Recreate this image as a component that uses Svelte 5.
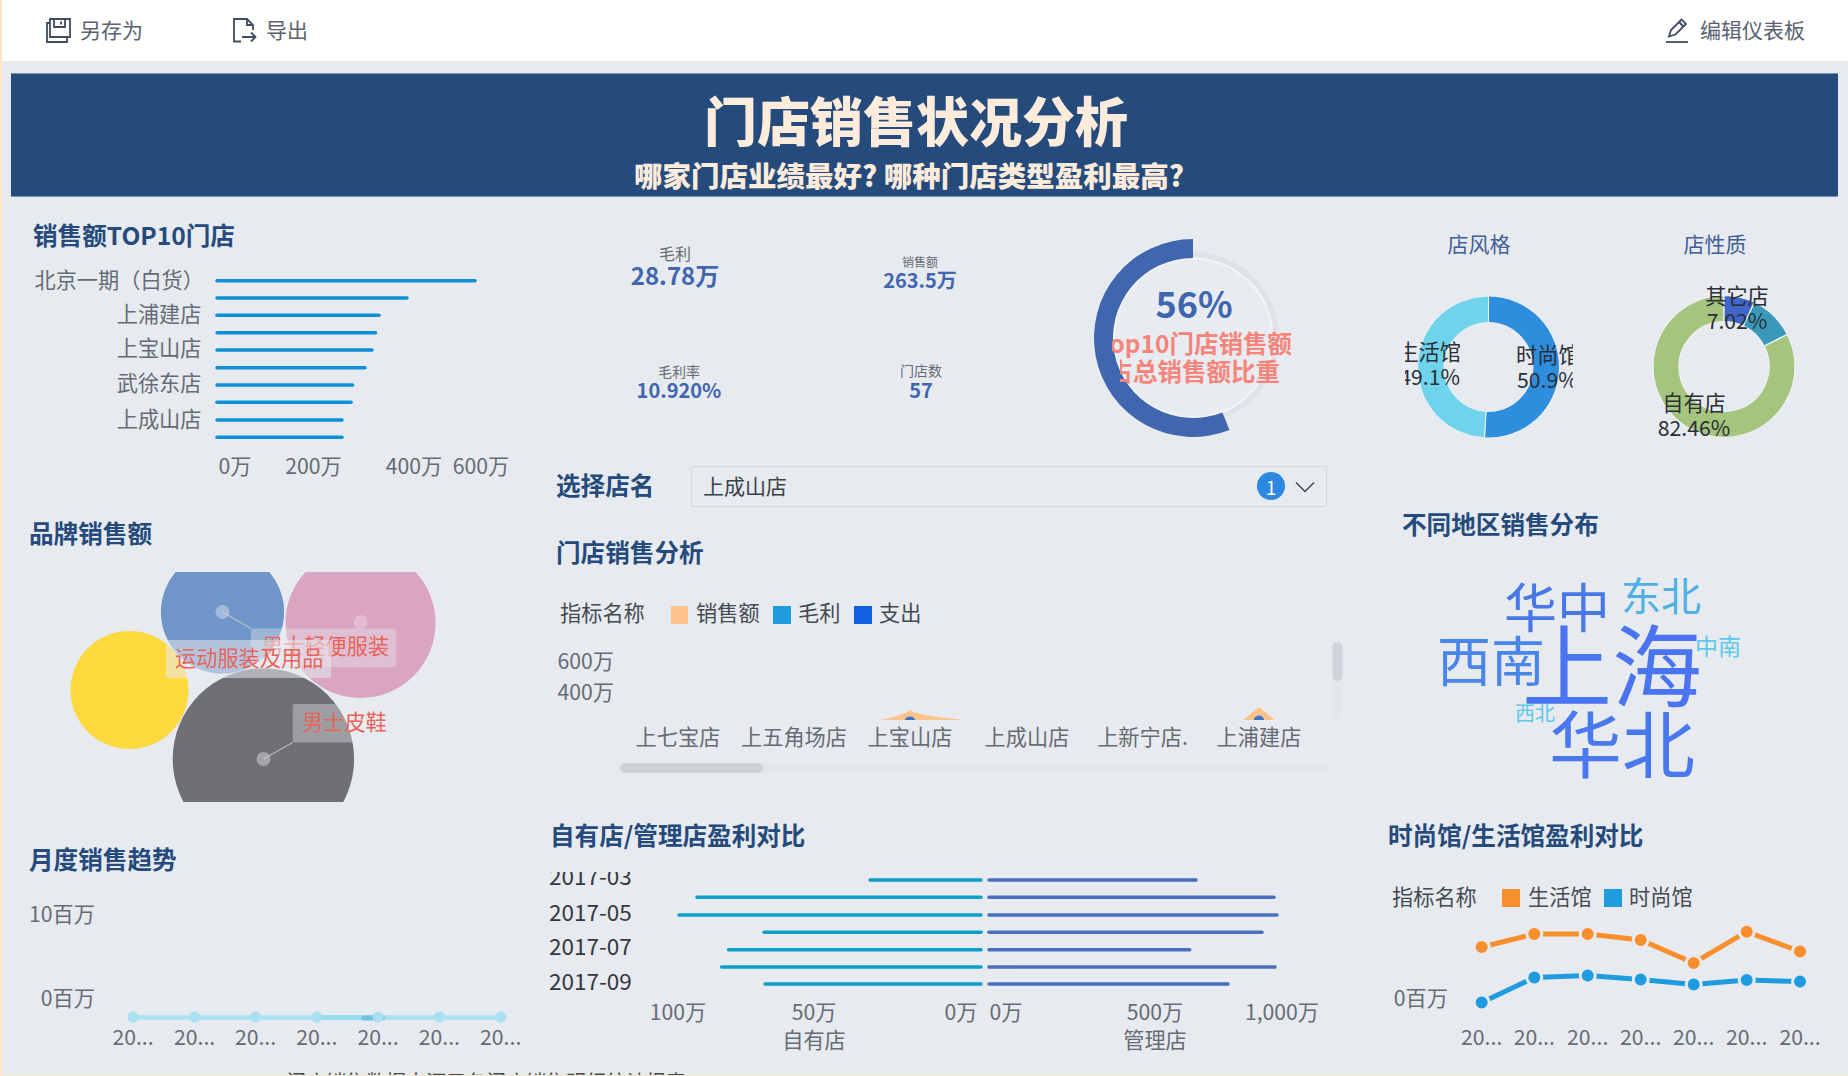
<script>
  const rad = (d) => ((d - 90) * Math.PI) / 180;
  const pt = (cx, cy, r, a) => `${(cx + r * Math.cos(rad(a))).toFixed(2)} ${(cy + r * Math.sin(rad(a))).toFixed(2)}`;
  function sector(cx, cy, r0, r1, a0, a1) {
    const large = Math.abs(a1 - a0) > 180 ? 1 : 0;
    return `M${pt(cx, cy, r1, a0)} A${r1} ${r1} 0 ${large} 1 ${pt(cx, cy, r1, a1)} L${pt(cx, cy, r0, a1)} A${r0} ${r0} 0 ${large} 0 ${pt(cx, cy, r0, a0)} Z`;
  }

  const topStores = [
    [280.7, 476], [298, 408], [315.3, 380], [332.7, 376.5], [350, 373],
    [367.7, 366], [385, 353.6], [402.3, 352], [420, 343], [437.3, 343]
  ];
  const topLabels = [
    ['北京一期（白货）', 280, 204], ['上浦建店', 314, 201.5], ['上宝山店', 348, 201.5], ['武徐东店', 383, 201.5], ['上成山店', 419, 201.5]
  ];
  const topAxis = [['0万', 235], ['200万', 313.5], ['400万', 414], ['600万', 481]];

  const monthX = [133, 194.6, 255.5, 316.8, 378, 439.4, 500.7];

  const storeNames = [
    ['上七宝店', 678], ['上五角场店', 794], ['上宝山店', 910],
    ['上成山店', 1027], ['上新宁店.', 1142.5], ['上浦建店', 1259]
  ];

  const mirror = [
    [880, 869, 1197], [897.3, 696, 1275], [915, 678, 1278], [932.3, 763, 1263],
    [949.7, 727.5, 1190.7], [967, 720.6, 1276], [984, 764, 1229]
  ];
  const mirrorDates = [['2017-05', 913], ['2017-07', 947], ['2017-09', 982]];
  const mirrorAxis = [['100万', 678], ['50万', 814], ['0万', 961], ['0万', 1006], ['500万', 1155], ['1,000万', 1282]];

  const words = [
    ['华中', 1557, 605, 53, '#4878e8'],
    ['东北', 1661, 594, 40, '#4fb0e6'],
    ['西南', 1491, 658, 54, '#4a86ea'],
    ['上海', 1612, 661, 90, '#4a74f0'],
    ['中南', 1718, 645, 23, '#5cc8ee'],
    ['西北', 1535, 712, 20, '#5cc8ee'],
    ['华北', 1622, 740, 73, '#4a78ee']
  ];

  const styleX = [1481.7, 1534.3, 1587.7, 1640.7, 1693.7, 1746.7, 1800];
  const orangeY = [947, 934, 934, 940, 963, 931.7, 951.5];
  const blueY = [1002.6, 977.6, 975.4, 979.4, 984.6, 980, 981.6];
  const poly = (xs, ys) => xs.map((x, i) => `${x},${ys[i]}`).join(' ');
</script>

<div class="page">
  <header class="toolbar">
    <button class="tool first">
      <svg width="26" height="26" viewBox="0 0 26 26" fill="none" stroke="#3f4c62" stroke-width="1.8">
        <path d="M5 2h20v18H5z" />
        <path d="M9 2v8h11V2M16 4.5v3" />
        <path d="M5 6H2v19h20v-5" />
      </svg>
      <span>另存为</span>
    </button>
    <button class="tool second">
      <svg width="26" height="26" viewBox="0 0 26 26" fill="none" stroke="#3f4c62" stroke-width="1.8">
        <path d="M10 24.5H3V2h13l6 6v5" />
        <path d="M16 2v6h6" />
        <path d="M11 20h13M20 15.5l4.5 4.5-4.5 4.5" />
      </svg>
      <span>导出</span>
    </button>
    <button class="tool last">
      <svg width="26" height="26" viewBox="0 0 26 26" fill="none" stroke="#3f4c62" stroke-width="1.8">
        <path d="M5 19.5 7 13 17.5 2.5l4.5 4.5L11.5 17.5z" />
        <path d="M15 5l4.5 4.5" />
        <path d="M2 25h22" />
      </svg>
      <span>编辑仪表板</span>
    </button>
  </header>

  <section class="banner">
    <h1>门店销售状况分析</h1>
    <p>哪家门店业绩最好? 哪种门店类型盈利最高?</p>
  </section>

  <main class="board">
    <div class="col col-left">
      <section class="w w-top">
        <h2>销售额TOP10门店</h2>
        <svg width="538" height="258" viewBox="2 252 538 258">
          {#each topStores as [y, end]}
            <line x1="217" x2={end - 1} y1={y} y2={y} class="bar-top" />
          {/each}
          {#each topLabels as [t, y, x]}
            <text {x} {y} class="t grey" text-anchor="end">{t}</text>
          {/each}
          {#each topAxis as [t, x]}
            <text {x} y="466" class="t grey" text-anchor="middle">{t}</text>
          {/each}
        </svg>
      </section>

      <section class="w w-brand">
        <h2>品牌销售额</h2>
        <svg width="538" height="270" viewBox="2 550 538 270">
          <defs>
            <clipPath id="bubbleClip"><rect x="0" y="572" width="540" height="230" /></clipPath>
          </defs>
          <g clip-path="url(#bubbleClip)">
            <circle cx="222.5" cy="612" r="61.6" fill="#7095c8" />
            <circle cx="360.5" cy="623" r="75" fill="#d9a5c2" />
            <circle cx="129.5" cy="690" r="59" fill="#fdd93e" />
            <circle cx="263.4" cy="759" r="90.7" fill="#6e7074" />
            <circle cx="222.5" cy="612" r="7" fill="#a3b9d9" />
            <circle cx="360.5" cy="622" r="7" fill="#e4bcd2" />
            <circle cx="263.5" cy="759" r="7" fill="#a3a5a8" />
            <line x1="222.5" y1="612" x2="251" y2="628.6" class="leader" />
            <line x1="263.5" y1="759" x2="292.7" y2="742.5" class="leader" />

            <rect x="251" y="628.6" width="145" height="38.4" rx="2" class="tag" />
            <text x="262" y="646" class="t red">男士轻便服装</text>
            <rect x="166" y="640" width="165" height="38" rx="2" class="tag tag-strong" />
            <text x="175" y="658" class="t red">运动服装及用品</text>
            <rect x="292.7" y="704" width="101.3" height="38.5" rx="2" class="tag" />
            <text x="302" y="722" class="t red">男士皮鞋</text>
          </g>
        </svg>
      </section>

      <section class="w w-month">
        <h2>月度销售趋势</h2>
        <svg width="538" height="200" viewBox="2 876 538 200">
          <text x="95" y="914.5" class="t grey" text-anchor="end">10百万</text>
          <text x="95" y="998.5" class="t grey" text-anchor="end">0百万</text>
          <line x1="133" x2="500.7" y1="1017.5" y2="1017.5" stroke="#a9e0f2" stroke-width="4.5" />
          <line x1="320" x2="385" y1="1017.5" y2="1017.5" stroke="#98dcf0" stroke-width="5" />
          <line x1="364" x2="382" y1="1018" y2="1018" stroke="#6cc4e6" stroke-width="5" stroke-linecap="round" />
          {#each monthX as x}
            <circle cx={x} cy="1017" r="5.5" fill="#a9e0f2" />
            <text {x} y="1037.5" class="t grey" text-anchor="middle">20...</text>
          {/each}
        </svg>
      </section>
    </div>

    <div class="col col-mid">
      <section class="kpis">
        <svg width="820" height="254" viewBox="540 196 820 254">
          <defs>
            <clipPath id="gaugeClip">
              <rect x="1112" y="325" width="200" height="33" />
              <rect x="1120" y="358" width="200" height="32" />
            </clipPath>
          </defs>
          <text x="675" y="254" class="k-label" font-size="16" text-anchor="middle">毛利</text>
          <text x="675" y="276" class="k-value" font-size="24" text-anchor="middle">28.78万</text>
          <text x="920" y="262" class="k-label" font-size="12" text-anchor="middle">销售额</text>
          <text x="920" y="281" class="k-value" font-size="20" text-anchor="middle">263.5万</text>
          <text x="679" y="372" class="k-label" font-size="14" text-anchor="middle">毛利率</text>
          <text x="679" y="391" class="k-value" font-size="20" text-anchor="middle">10.920%</text>
          <text x="921" y="371" class="k-label" font-size="14" text-anchor="middle">门店数</text>
          <text x="921" y="391" class="k-value" font-size="20" text-anchor="middle">57</text>

          <circle cx="1193" cy="338" r="83" fill="none" stroke="#dfe3e8" stroke-width="6" />
          <circle cx="1193" cy="338" r="79.5" fill="#e8ebf0" stroke="#f3f5f8" stroke-width="2" />
          <path d={sector(1193, 338, 80, 99, 158.4, 360)} fill="#3f66ae" />
          <text x="1194" y="305" class="gauge-num" text-anchor="middle">56%</text>
          <g clip-path="url(#gaugeClip)">
            <text x="1292" y="342" class="gauge-t" text-anchor="end">Top10门店销售额</text>
            <text x="1280" y="370" class="gauge-t" text-anchor="end">占总销售额比重</text>
          </g>
        </svg>
      </section>

      <section class="picker">
        <span class="picker-label">选择店名</span>
        <div class="select">
          <span class="select-value">上成山店</span>
          <span class="badge">1</span>
          <svg width="20" height="12" viewBox="0 0 20 12" fill="none" stroke="#3c4654" stroke-width="1.5">
            <path d="M1 1.5l9 9 9-9" />
          </svg>
        </div>
      </section>

      <section class="w w-store">
        <h2>门店销售分析</h2>
        <svg width="820" height="221" viewBox="540 569 820 221">
          <text x="560" y="613" class="t dark">指标名称</text>
          <rect x="671" y="606" width="17" height="18" fill="#fdc38a" />
          <text x="696" y="613" class="t dark">销售额</text>
          <rect x="773" y="606" width="18" height="18" fill="#1f9ce0" />
          <text x="798" y="613" class="t dark">毛利</text>
          <rect x="854" y="606" width="18" height="18" fill="#1060e0" />
          <text x="879" y="613" class="t dark">支出</text>

          <text x="614" y="661" class="t grey" text-anchor="end">600万</text>
          <text x="614" y="692" class="t grey" text-anchor="end">400万</text>

          <path d="M880.5 720 Q905 715 910 710 Q915 715 964 720Z" fill="#fdc38a" />
          <path d="M905 720a5 3.5 0 0 1 10 0z" fill="#3f72c8" />
          <path d="M1243 720 L1259 707 L1275 720Z" fill="#fdc38a" />
          <path d="M1254 720a5 4.5 0 0 1 10 0z" fill="#3f72c8" />

          {#each storeNames as [t, x]}
            <text {x} y="737" class="t grey" text-anchor="middle">{t}</text>
          {/each}

          <rect x="620" y="763" width="707" height="10" rx="5" fill="#e3e6ea" />
          <rect x="620" y="763" width="143" height="10" rx="5" fill="#cfd3d9" />
          <rect x="1332.5" y="642" width="10" height="78" rx="5" fill="#e3e6ea" />
          <rect x="1332.5" y="642" width="10" height="39" rx="5" fill="#d0d4da" />
        </svg>
      </section>

      <section class="w w-mirror">
        <h2>自有店/管理店盈利对比</h2>
        <svg width="820" height="224" viewBox="540 852 820 224">
          <defs>
            <clipPath id="dateClip"><rect x="540" y="872" width="100" height="30" /></clipPath>
          </defs>
          <g clip-path="url(#dateClip)">
            <text x="549" y="877" class="t date">2017-03</text>
          </g>
          {#each mirrorDates as [t, y]}
            <text x="549" {y} class="t date">{t}</text>
          {/each}
          {#each mirror as [y, l, r]}
            <line x1={l + 1} x2="981" y1={y} y2={y} class="bar-left" />
            <line x1="989" x2={r - 1} y1={y} y2={y} class="bar-right" />
          {/each}
          {#each mirrorAxis as [t, x]}
            <text {x} y="1012" class="t grey" text-anchor="middle">{t}</text>
          {/each}
          <text x="814" y="1040" class="t grey" text-anchor="middle">自有店</text>
          <text x="1155" y="1040" class="t grey" text-anchor="middle">管理店</text>
        </svg>
      </section>
    </div>

    <div class="col col-right">
      <section class="donuts">
        <svg width="488" height="304" viewBox="1360 196 488 304">
          <defs>
            <clipPath id="donutClip"><rect x="1405" y="290" width="168" height="150" /></clipPath>
          </defs>
          <text x="1479" y="245" class="donut-title" text-anchor="middle">店风格</text>
          <text x="1715" y="245" class="donut-title" text-anchor="middle">店性质</text>

          <path d={sector(1488.5, 367, 44.5, 71, 0, 183.2)} fill="#2e8ddd" stroke="#eef2f6" stroke-width="1" />
          <path d={sector(1488.5, 367, 44.5, 71, 183.2, 360)} fill="#6fd3ec" stroke="#eef2f6" stroke-width="1" />
          <g clip-path="url(#donutClip)">
            <text x="1461" y="352" class="t ink" text-anchor="end">生活馆</text>
            <text x="1460" y="377" class="t ink" text-anchor="end">49.1%</text>
            <text x="1516" y="355" class="t ink">时尚馆</text>
            <text x="1517" y="380" class="t ink">50.9%</text>
          </g>

          <path d={sector(1724, 366.5, 45, 71, 63, 360)} fill="#a5c47e" stroke="#eef2f6" stroke-width="1.2" />
          <path d={sector(1724, 366.5, 45, 71, 25.3, 63)} fill="#3a98b8" stroke="#eef2f6" stroke-width="1.2" />
          <path d={sector(1724, 366.5, 45, 71, 0, 25.3)} fill="#3f66c8" stroke="#eef2f6" stroke-width="1.2" />
          <text x="1737" y="296" class="t ink" text-anchor="middle">其它店</text>
          <text x="1737" y="321" class="t ink" text-anchor="middle">7.02%</text>
          <text x="1694" y="403" class="t ink" text-anchor="middle">自有店</text>
          <text x="1694" y="428" class="t ink" text-anchor="middle">82.46%</text>
        </svg>
      </section>

      <section class="w w-cloud">
        <h2>不同地区销售分布</h2>
        <svg width="488" height="269" viewBox="1360 541 488 269">
          {#each words as [t, x, y, size, color]}
            <text {x} {y} font-size={size} fill={color} class="word" text-anchor="middle">{t}</text>
          {/each}
        </svg>
      </section>

      <section class="w w-style">
        <h2>时尚馆/生活馆盈利对比</h2>
        <svg width="488" height="224" viewBox="1360 852 488 224">
          <text x="1392" y="897" class="t dark">指标名称</text>
          <rect x="1502" y="889" width="18" height="18" fill="#f98e2c" />
          <text x="1528" y="897" class="t dark">生活馆</text>
          <rect x="1604" y="889" width="18" height="18" fill="#1f9ce0" />
          <text x="1629" y="897" class="t dark">时尚馆</text>
          <text x="1448" y="998.5" class="t grey" text-anchor="end">0百万</text>

          <polyline points={poly(styleX, orangeY)} class="ln" stroke="#f98e2c" />
          <polyline points={poly(styleX, blueY)} class="ln" stroke="#1f9ce0" />
          {#each styleX as x, i}
            <circle cx={x} cy={orangeY[i]} r="7.5" fill="#f98e2c" class="dot" />
            <circle cx={x} cy={blueY[i]} r="7.5" fill="#1f9ce0" class="dot" />
            <text {x} y="1037.5" class="t grey" text-anchor="middle">20...</text>
          {/each}
        </svg>
      </section>
    </div>
  </main>

  <div class="cutoff">门店销售数据来源于各门店销售明细统计报表</div>
</div>

<style>
  :global(body) {
    margin: 0;
    background: #e7eaef;
  }
  .page {
    position: relative;
    box-sizing: border-box;
    width: 1848px;
    height: 1076px;
    overflow: hidden;
    background: #e7eaef;
    border-left: 2px solid #fbe6c0;
    border-bottom: 1px solid #fbe9cc;
    font-family: "Noto Sans CJK SC", "Noto Sans", sans-serif;
  }
  .toolbar {
    box-sizing: border-box;
    display: flex;
    align-items: center;
    height: 61px;
    padding-bottom: 2px;
    background: #fff;
  }
  .tool {
    display: flex;
    align-items: center;
    gap: 9px;
    padding: 0;
    border: 0;
    background: none;
    font: inherit;
    font-size: 21px;
    color: #5a6270;
  }
  .tool span { padding-bottom: 2px; }
  .first { margin-left: 43px; }
  .second { margin-left: 88px; }
  .last { margin-left: auto; margin-right: 43px; gap: 10px; }

  .banner {
    box-sizing: border-box;
    display: flex;
    flex-direction: column;
    align-items: center;
    width: 1827px;
    height: 124px;
    margin: 12px 0 0 9px;
    padding-top: 17px;
    background: #254a7c;
    border-top: 1px solid #7b93b3;
    border-bottom: 1px solid #7b93b3;
    color: #fdebdc;
  }
  .banner h1 {
    margin: 0 17px 0 0;
    font-size: 53px;
    line-height: 56px;
    font-weight: 900;
  }
  .banner p {
    margin: 11px 31px 0 0;
    font-size: 28.5px;
    line-height: 34px;
    font-weight: 900;
  }

  .board {
    display: flex;
    height: 880px;
    margin-top: -1px;
  }
  .col { display: flex; flex-direction: column; }
  .col-left { width: 538px; }
  .col-mid { width: 820px; }
  .col-right { width: 488px; }

  h2 {
    margin: 0;
    font-size: 24.6px;
    line-height: 34px;
    font-weight: 700;
    color: #254a7c;
    white-space: nowrap;
    transform: translateY(-1px);
  }
  svg { display: block; }
  .w-top h2 { padding: 22px 0 0 31px; }
  .w-brand h2 { padding: 6px 0 0 27px; }
  .w-month h2 { padding: 22px 0 0 27px; }
  .w-store h2 { padding-left: 16px; }
  .w-mirror h2 { padding: 28px 0 0 10px; }
  .w-cloud h2 { padding: 7px 0 0 42px; }
  .w-style h2 { padding: 8px 0 0 28px; }

  .t {
    font-size: 21.2px;
    dominant-baseline: central;
    transform: translateY(-2px);
  }
  .date { font-size: 22.5px; fill: #333840; }
  .grey { fill: #666c75; }
  .dark { fill: #444a52; }
  .ink { fill: #2b2f36; }
  .red { fill: #e8645a; }

  .bar-top { stroke: #0e8fd8; stroke-width: 3.5; stroke-linecap: round; }
  .bar-left { stroke: #0e9fc9; stroke-width: 3.5; stroke-linecap: round; }
  .bar-right { stroke: #4a6fbc; stroke-width: 3.5; stroke-linecap: round; }

  .leader { stroke: #d5d8dd; stroke-width: 1.2; opacity: 0.7; }
  .tag { fill: #e8eaee; fill-opacity: 0.38; }
  .tag-strong { fill-opacity: 0.55; }

  .k-label { fill: #666c75; dominant-baseline: central; transform: translateY(-1px); }
  .k-value { fill: #3f66ae; font-weight: 700; dominant-baseline: central; transform: translateY(-2px); }
  .gauge-num { fill: #3f66ae; font-size: 36px; font-weight: 700; dominant-baseline: central; transform: translateY(-3px); }
  .gauge-t { fill: #f5857a; font-size: 24.5px; font-weight: 700; dominant-baseline: central; }

  .picker {
    box-sizing: border-box;
    display: flex;
    align-items: center;
    height: 85px;
    padding: 16px 0 28px 16px;
  }
  .picker-label {
    width: 135px;
    padding-bottom: 6px;
    font-size: 24.6px;
    font-weight: 700;
    color: #254a7c;
  }
  .select {
    box-sizing: border-box;
    display: flex;
    align-items: center;
    width: 636px;
    height: 41px;
    padding: 0 11px 0 11px;
    border: 1px solid #d3d7dd;
    border-radius: 2px;
    font-size: 21px;
    color: #3c424c;
  }
  .select-value { flex: 1; padding-bottom: 4px; }
  .badge {
    display: flex;
    align-items: center;
    justify-content: center;
    width: 28px;
    height: 28px;
    margin: -1px 10px 0 0;
    border-radius: 50%;
    background: #2c88e0;
    color: #fff;
    font-size: 19px;
  }

  .donut-title { fill: #3f5f96; font-size: 21px; dominant-baseline: central; transform: translateY(-2px); }
  .word { dominant-baseline: central; }

  .ln { fill: none; stroke-width: 5; }
  .dot { stroke: #e7eaef; stroke-width: 3; }

  .cutoff {
    position: absolute;
    left: 284px;
    top: 1069px;
    font-size: 20px;
    line-height: 26px;
    color: #444a52;
    white-space: nowrap;
  }
</style>
